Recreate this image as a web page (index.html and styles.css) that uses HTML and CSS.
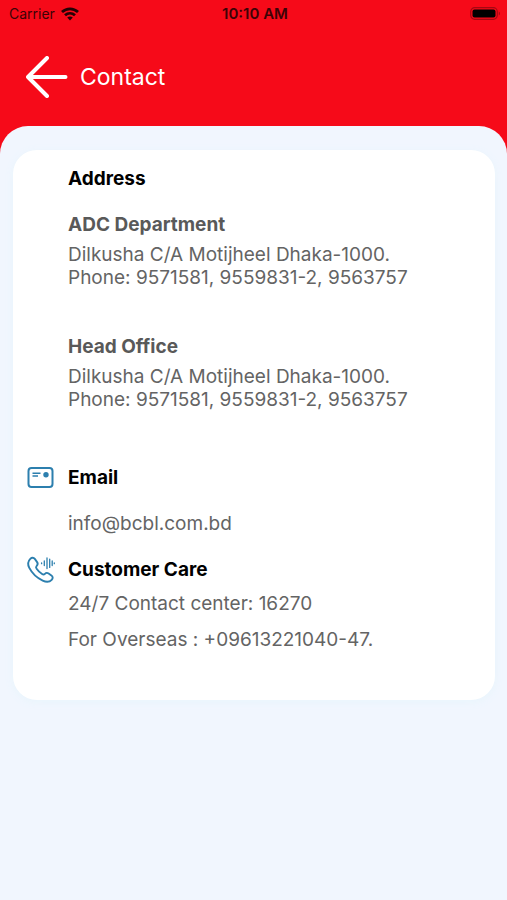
FILE: index.html
```html
<!DOCTYPE html>
<html lang="en">
<head>
<meta charset="utf-8">
<meta name="viewport" content="width=device-width, initial-scale=1">
<title>Contact</title>
<link rel="stylesheet" href="styles.css">
</head>
<body>
<header class="top">
  <div class="status">
    <div class="carrier">
      <span>Carrier</span>
      <svg width="18" height="14" viewBox="0 0 18 14" fill="none" stroke="currentColor" stroke-width="2.8" aria-hidden="true">
        <path d="M1 5C5.600.7 12.400.7 17 5"/>
        <path d="M4 8.300c3-2.700 7-2.700 10 0"/>
        <path d="M9 13.400 6.200 10.600c1.700-1.400 3.900-1.400 5.600 0z" fill="currentColor" stroke="none"/>
      </svg>
    </div>
    <time class="clock">10:10 AM</time>
    <svg class="battery" width="31" height="14" viewBox="0 0 31 14" aria-hidden="true">
      <rect x=".7" y=".7" width="26.600" height="11.600" rx="4" fill="none" stroke="#a50812" stroke-width="1.200"/>
      <rect x="2.500" y="2.500" width="23" height="8" rx="2"/>
      <path d="M28.800 4.500c1.600.7 1.600 3.300 0 4z" fill="#a50812"/>
    </svg>
  </div>
  <nav class="bar">
    <button class="back" type="button" aria-label="Back">
      <svg width="42" height="42" viewBox="0 0 42 42" fill="none" stroke="currentColor" stroke-width="4" stroke-linecap="round" stroke-linejoin="round" aria-hidden="true">
        <path d="M39.500 21H2M21 2 2 21l19 19"/>
      </svg>
    </button>
    <h1 class="title">Contact</h1>
  </nav>
</header>
<main class="sheet">
  <div class="card">
    <section class="entry">
      <div class="details">
        <h2>Address</h2>
        <div class="office">
          <h3>ADC Department</h3>
          <p>Dilkusha C/A Motijheel Dhaka-1000.<br>Phone: 9571581, 9559831-2, 9563757</p>
        </div>
        <div class="office">
          <h3>Head Office</h3>
          <p>Dilkusha C/A Motijheel Dhaka-1000.<br>Phone: 9571581, 9559831-2, 9563757</p>
        </div>
      </div>
    </section>
    <section class="entry">
      <svg class="icon" width="28" height="24" viewBox="0 0 28 24" fill="none" stroke="currentColor" aria-hidden="true">
        <rect x="1.500" y="2" width="24" height="19" rx="3" stroke-width="2"/>
        <path d="M5.500 7.200h8M5.500 10h5.500" stroke-width="1.600"/>
        <circle cx="19" cy="8.800" r="2.700" fill="currentColor" stroke="none"/>
      </svg>
      <div class="details">
        <h2>Email</h2>
        <p class="email">info@bcbl.com.bd</p>
      </div>
    </section>
    <section class="entry">
      <svg class="icon" width="28" height="26" viewBox="0 1 28 26" fill="none" stroke="currentColor" stroke-linecap="round" stroke-linejoin="round" aria-hidden="true">
        <path d="M3.300 1.800C4.800.3 6.700.4 7.800 1.900l2.300 3.200c.9 1.300.7 2.600-.4 3.700-1 1-.9 1.800-.1 2.900 1.500 2.100 3.300 3.900 5.500 5.300 1.100.7 1.900.7 2.800-.2 1.100-1.100 2.400-1.200 3.700-.3l2.800 2c1.600 1.100 1.700 2.900.3 4.300-2.200 2.300-5.300 2.500-9 .8C9.900 20.900 5.100 16.300 2.300 10.900.5 7.300.9 4.200 3.300 1.800z" stroke-width="1.900"/>
        <path d="M14.600 5.900v.8M17.300 4v4.600M20 1v10.600M22.700 2.200v8.200M25.200 4v4.600M27.300 5.900v.8" stroke-width="1.300"/>
      </svg>
      <div class="details">
        <h2>Customer Care</h2>
        <p class="line">24/7 Contact center: 16270</p>
        <p class="line">For Overseas : +09613221040-47.</p>
      </div>
    </section>
  </div>
</main>
</body>
</html>
```
FILE: styles.css
```css
* {
  box-sizing: border-box;
}

body {
  margin: 0;
  min-height: 100vh;
  display: flex;
  flex-direction: column;
  background: #f60a19;
  font-family: Inter, "Liberation Sans", sans-serif;
  font-size: 19px;
  line-height: 24px;
  color: #646464;
}

h1, h2, h3, p {
  margin: 0;
}

.status {
  display: grid;
  grid-template-columns: 1fr auto 1fr;
  align-items: center;
  height: 28px;
  padding: 0 6px 0 9px;
  font-size: 14px;
  color: #3c0306;
}

.carrier {
  display: flex;
  align-items: center;
  gap: 6px;
}

.carrier svg {
  color: #240205;
}

.clock {
  font-size: 15px;
  font-weight: 600;
}

.battery {
  justify-self: end;
}

.bar {
  display: flex;
  align-items: center;
  gap: 12px;
  height: 98px;
  padding: 0 26px;
  color: #fff;
}

.back {
  display: flex;
  padding: 0;
  border: 0;
  background: none;
  color: inherit;
}

.title {
  font-size: 23px;
  font-weight: 400;
}

.sheet {
  flex: 1;
  padding: 24px 12px 24px 13px;
  border-radius: 28px 28px 0 0;
  background: #f1f6fe;
}

.card {
  display: flex;
  flex-direction: column;
  gap: 22px;
  padding: 17px 14px 48px;
  border-radius: 24px;
  background: #fff;
  box-shadow: 0 2px 10px #e8f5fc;
}

.entry {
  display: grid;
  grid-template-columns: 28px 1fr;
  column-gap: 13px;
}

.details {
  grid-column: 2;
}

.icon {
  overflow: visible;
  color: #2c7fae;
}

h2, h3 {
  font-size: 19px;
  font-weight: 700;
}

h2 {
  color: #000;
}

h3 {
  color: #595959;
}

.office {
  padding: 22px 0 24px;
}

.office + .office {
  padding-bottom: 33px;
}

.office p {
  margin-top: 6px;
  line-height: 23px;
}

.email {
  margin-top: 22px;
}

.line {
  margin-top: 10px;
}

.line + .line {
  margin-top: 12px;
}
```
